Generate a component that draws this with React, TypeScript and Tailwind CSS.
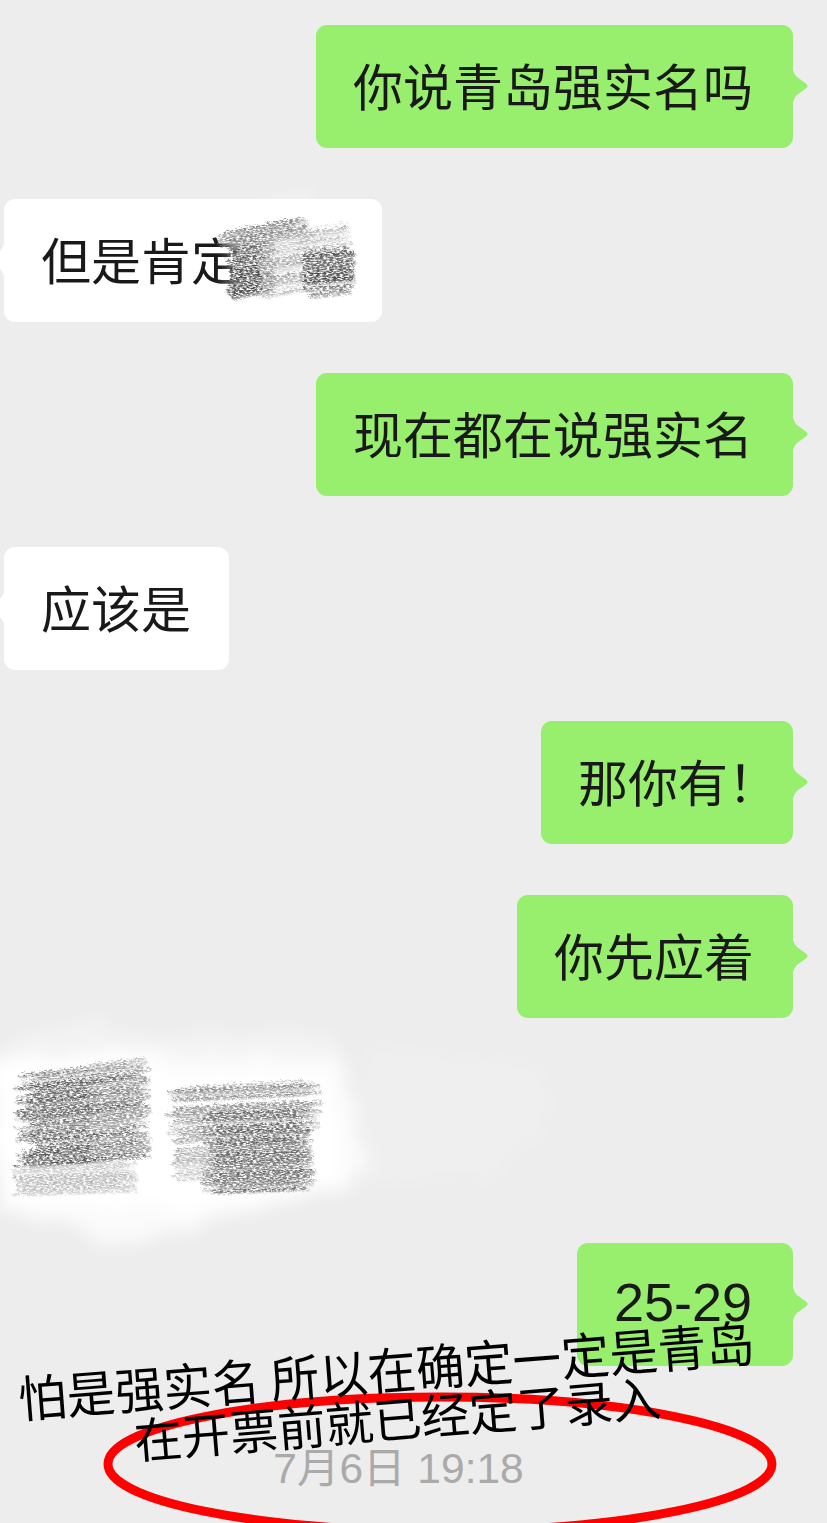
import { useMemo } from "react";

const cjk = "font-['Noto_Sans_CJK_SC','Noto_Sans',sans-serif]";

// Small seeded generator so the pencil strokes stay the same between renders
function makeRandom(seed: number) {
  let s = seed;
  return () => {
    s = (s * 16807) % 2147483647;
    return (s - 1) / 2147483646;
  };
}

type Patch = { x: number; y: number; w: number; h: number; tilt: number; count: number; min: number; max: number; seed: number };

function hatch({ x, y, w, h, tilt, count, min, max, seed }: Patch) {
  const rnd = makeRandom(seed);
  return Array.from({ length: count }, () => {
    const sy = y + rnd() * h;
    const sx = x + rnd() * w * 0.2 - 3;
    const ex = x + w - rnd() * w * 0.2 + 3;
    const g = Math.round(min + rnd() * (max - min));
    return {
      x1: sx,
      y1: sy + tilt * (rnd() * 0.4 + 0.8),
      x2: ex,
      y2: sy - tilt * (rnd() * 0.4 + 0.8),
      stroke: `rgb(${g},${g},${g})`,
      width: 1.5 + rnd() * 3,
      opacity: 0.25 + rnd() * 0.4,
    };
  });
}

function Scribble({ patches, id }: { patches: Patch[]; id: string }) {
  const lines = useMemo(() => patches.flatMap(hatch), [patches]);
  return (
    <g filter={`url(#${id})`}>
      {lines.map((l, i) => (
        <line
          key={i}
          x1={l.x1}
          y1={l.y1}
          x2={l.x2}
          y2={l.y2}
          stroke={l.stroke}
          strokeWidth={l.width}
          strokeOpacity={l.opacity}
          strokeLinecap="round"
        />
      ))}
    </g>
  );
}

const bubbleScribble: Patch[] = [
  { x: 230, y: 236, w: 42, h: 58, tilt: 4, count: 80, min: 55, max: 105, seed: 11 },
  { x: 222, y: 226, w: 84, h: 16, tilt: 8, count: 26, min: 110, max: 165, seed: 19 },
  { x: 262, y: 236, w: 50, h: 58, tilt: 4, count: 40, min: 140, max: 195, seed: 23 },
  { x: 306, y: 250, w: 46, h: 46, tilt: 2, count: 80, min: 65, max: 120, seed: 37 },
  { x: 300, y: 226, w: 50, h: 22, tilt: 3, count: 14, min: 150, max: 190, seed: 43 },
];

const blockScribble: Patch[] = [
  { x: 18, y: 1070, w: 130, h: 92, tilt: 5, count: 120, min: 70, max: 125, seed: 41 },
  { x: 90, y: 1062, w: 58, h: 100, tilt: 4, count: 50, min: 150, max: 190, seed: 47 },
  { x: 14, y: 1166, w: 120, h: 28, tilt: 2, count: 44, min: 175, max: 210, seed: 53 },
  { x: 170, y: 1084, w: 150, h: 50, tilt: 3, count: 70, min: 135, max: 180, seed: 67 },
  { x: 205, y: 1112, w: 108, h: 80, tilt: 2, count: 100, min: 85, max: 135, seed: 71 },
  { x: 175, y: 1130, w: 40, h: 50, tilt: 2, count: 30, min: 150, max: 185, seed: 83 },
];

function Tail({ side }: { side: "left" | "right" }) {
  return side === "right" ? (
    <svg viewBox="0 0 15 32" className="absolute left-full top-[45px] h-8 w-[15px] fill-[#98ee6d]">
      <path d="M0 0C1 3 2 5 4 7L13.5 14Q15.5 16 13.5 18L4 25C2 27 1 29 0 32Z" />
    </svg>
  ) : (
    <svg viewBox="0 0 15 32" className="absolute right-full top-[45px] h-8 w-[15px] fill-white">
      <path d="M15 0C14 3 13 5 11 7L1.500 14Q-0.500 16 1.500 18L11 25C13 27 14 29 15 32Z" />
    </svg>
  );
}

function Bubble({ text, side, className }: { text: string; side: "left" | "right"; className: string }) {
  const tone = side === "right" ? "self-end bg-[#98ee6d]" : "self-start bg-white";
  return (
    <div className={`relative flex h-[123px] items-center rounded-[11px] pb-[6px] ${tone} ${className}`}>
      <span className="whitespace-nowrap text-[50px] leading-none text-[#191919]">{text}</span>
      <Tail side={side} />
    </div>
  );
}

export default function App() {
  return (
    <div className={`relative h-[1523px] w-[827px] overflow-hidden bg-[#ededed] ${cjk}`}>
      <div className="flex flex-col gap-[51px] pb-0 pl-1 pr-[34px] pt-[25px]">
        <Bubble side="right" text="你说青岛强实名吗" className="w-[477px] pl-[37px]" />
        <Bubble side="left" text="但是肯定" className="w-[378px] pl-[37px]" />
        <Bubble side="right" text="现在都在说强实名" className="w-[477px] pl-[37px]" />
        <Bubble side="left" text="应该是" className="w-[225px] pl-[37px]" />
        <Bubble side="right" text="那你有！" className="w-[252px] pl-[37px]" />
        <Bubble side="right" text="你先应着" className="w-[276px] pl-[37px]" />
        <div className="h-[123px]" />
        <div className="relative flex h-[123px] w-[216px] items-center self-end rounded-[11px] bg-[#98ee6d] pb-[6px] pl-[37px]">
          <span className="font-['Liberation_Sans',sans-serif] text-[54px] leading-none text-[#191919]">25-29</span>
          <Tail side="right" />
        </div>
      </div>

      <p className="mt-[82px] pr-[30px] text-center font-['Liberation_Sans','Noto_Sans_CJK_SC',sans-serif] text-[42.5px] leading-none text-[#aaaaaa]">
        7月6日 19:18
      </p>

      {/* pencil smudges over the hidden parts of the chat */}
      <svg className="absolute inset-0" width="827" height="1523" viewBox="0 0 827 1523">
        <defs>
          <filter id="soft" x="-20%" y="-20%" width="140%" height="140%">
            <feTurbulence type="fractalNoise" baseFrequency="0.04" numOctaves="3" seed="4" />
            <feDisplacementMap in="SourceGraphic" scale="22" />
            <feGaussianBlur stdDeviation="9" />
          </filter>
          <filter id="pencil" x="-10%" y="-10%" width="120%" height="120%">
            <feTurbulence type="fractalNoise" baseFrequency="0.3 0.75" numOctaves="3" seed="9" result="grain" />
            <feDisplacementMap in="SourceGraphic" in2="grain" scale="8" result="rough" />
            <feColorMatrix
              in="grain"
              type="matrix"
              values="0 0 0 0 0  0 0 0 0 0  0 0 0 0 0  0 0 0 3 -0.85"
              result="mask"
            />
            <feComposite in="rough" in2="mask" operator="in" />
            <feGaussianBlur stdDeviation="0.6" />
          </filter>
        </defs>

        <g filter="url(#soft)" fill="#ffffff">
          <path opacity="0.3" d="M5 1040 L105 1014 L108 1032 L335 1030 L335 1056 L110 1066 L5 1066Z" />
          <path opacity="0.75" d="M0 1062 L340 1052 L370 1170 L200 1228 L100 1244 L70 1222 L0 1216Z" />
          <path d="M-10 1060 L160 1050 L170 1205 L0 1210Z" />
          <path d="M150 1075 L335 1072 L345 1185 L200 1215 L150 1205Z" />
          <path opacity="0.12" d="M360 1040 L540 1060 L560 1110 L500 1180 L360 1190Z" />
          <path opacity="0.7" d="M262 208 L312 190 L316 198 L270 216Z" />
          <path d="M236 225 L350 218 L350 298 L236 298Z" />
        </g>
        <Scribble id="pencil" patches={blockScribble} />
        <Scribble id="pencil" patches={bubbleScribble} />
      </svg>

      {/* red ring and caption drawn on top of the screenshot */}
      <svg className="absolute inset-0" width="827" height="1523" viewBox="0 0 827 1523">
        <ellipse cx="440" cy="1464" rx="332" ry="67" fill="none" stroke="#ff0000" strokeWidth="9" />
      </svg>
      <div className="absolute left-[18px] top-[1371px] w-[760px] text-[50px] leading-none text-black">
        <p className="origin-left scale-x-[0.97] rotate-[-4.400deg] whitespace-nowrap">怕是强实名 所以在确定一定是青岛</p>
        <p className="ml-[116px] mt-[-7px] origin-left text-[48px] rotate-[-4.700deg] whitespace-nowrap">在开票前就已经定了录入</p>
      </div>
    </div>
  );
}
